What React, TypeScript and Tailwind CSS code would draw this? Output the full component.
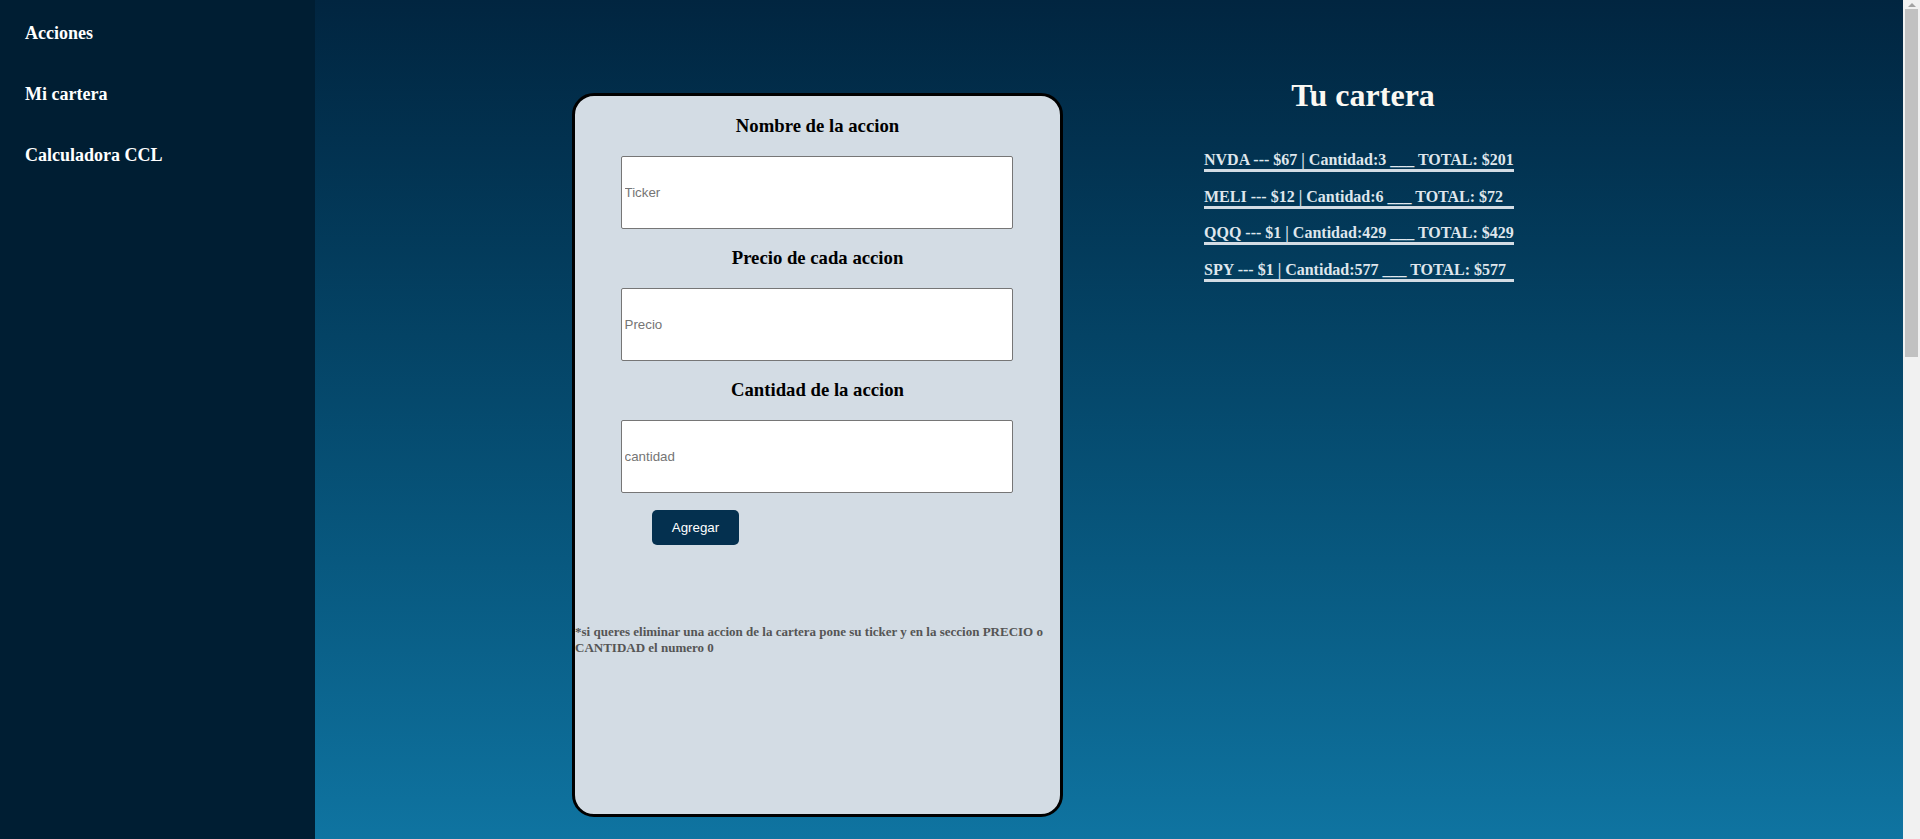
const cartera = [
    { ticker: "NVDA", precio: 67, cantidad: 3, total: 201 },
    { ticker: "MELI", precio: 12, cantidad: 6, total: 72 },
    { ticker: "QQQ", precio: 1, cantidad: 429, total: 429 },
    { ticker: "SPY", precio: 1, cantidad: 577, total: 577 },
];

const serif = "font-['Liberation_Serif','Times_New_Roman',serif]";

function Sidebar() {
    return (
        <nav className={`w-[315px] shrink-0 bg-[#001e33] flex flex-col gap-[40px] pt-[23px] px-[25px] ${serif}`}>
            <a className="text-[18px] leading-[21px] font-bold text-white cursor-pointer">Acciones</a>
            <a className="text-[18px] leading-[21px] font-bold text-white cursor-pointer">Mi cartera</a>
            <a className="text-[18px] leading-[21px] font-bold text-white cursor-pointer">Calculadora CCL</a>
        </nav>
    );
}

function Campo({ titulo, placeholder }: { titulo: string; placeholder: string }) {
    return (
        <>
            <h3 className="text-[18.72px] leading-[22px] font-bold text-black">{titulo}</h3>
            <input
                className="w-[392px] h-[73px] mt-[19px] mb-[18px] mr-[2px] bg-white border border-[#767676] rounded-[2px] px-[3px] text-[13.33px] font-['Liberation_Sans',Arial,sans-serif] placeholder:text-[#757575] outline-none"
                placeholder={placeholder}
            />
        </>
    );
}

function Formulario() {
    return (
        <div className={`w-[491px] h-[724px] mt-[93px] shrink-0 border-[3px] border-black rounded-[22px] bg-[#d3dce4] flex flex-col items-center pt-[19px] ${serif}`}>
            <Campo titulo="Nombre de la accion" placeholder="Ticker" />
            <Campo titulo="Precio de cada accion" placeholder="Precio" />
            <Campo titulo="Cantidad de la accion" placeholder="cantidad" />
            <button className="self-start ml-[77px] -mt-[1px] w-[87px] h-[35px] rounded-[5px] bg-[#04304f] text-white text-[13.33px] font-['Liberation_Sans',Arial,sans-serif] cursor-pointer">
                Agregar
            </button>
            <p className="self-stretch mt-[79px] text-[13px] leading-[16px] font-bold text-[#555]">
                *si queres eliminar una accion de la cartera pone su ticker y en la seccion PRECIO o CANTIDAD el numero 0
            </p>
        </div>
    );
}

function Cartera() {
    return (
        <div className={`w-[408px] ml-[96px] pt-[77px] flex flex-col ${serif}`}>
            <h1 className="text-center text-[32px] leading-[37px] font-bold text-[#fbf8f2]">Tu cartera</h1>
            <ul className="w-fit ml-[45px] mt-[36px] flex flex-col gap-[14.5px]">
                {cartera.map((a) => (
                    <li
                        key={a.ticker}
                        className="text-[16px] leading-[19px] font-bold text-[#dfe6ec] border-b-[3px] border-[#d3dce4]"
                    >
                        {a.ticker} --- ${a.precio} | Cantidad:{a.cantidad} ___ TOTAL: ${a.total}
                    </li>
                ))}
            </ul>
        </div>
    );
}

function Scrollbar() {
    return (
        <div className="w-[17px] shrink-0 bg-[#f1f1f1] flex flex-col items-center">
            <div className="h-[9px] flex items-center justify-center">
                <div className="w-0 h-0 border-l-[4px] border-r-[4px] border-b-[4px] border-l-transparent border-r-transparent border-b-[#a3a3a3]" />
            </div>
            <div className="w-[13px] h-[348px] bg-[#c1c1c1]" />
        </div>
    );
}

export default function App() {
    return (
        <div className="flex h-[839px] overflow-hidden">
            <Sidebar />
            <main className="flex-1 flex items-start pl-[257px] bg-linear-to-b from-[#012540] to-[#0f74a1]">
                <Formulario />
                <Cartera />
            </main>
            <Scrollbar />
        </div>
    );
}
